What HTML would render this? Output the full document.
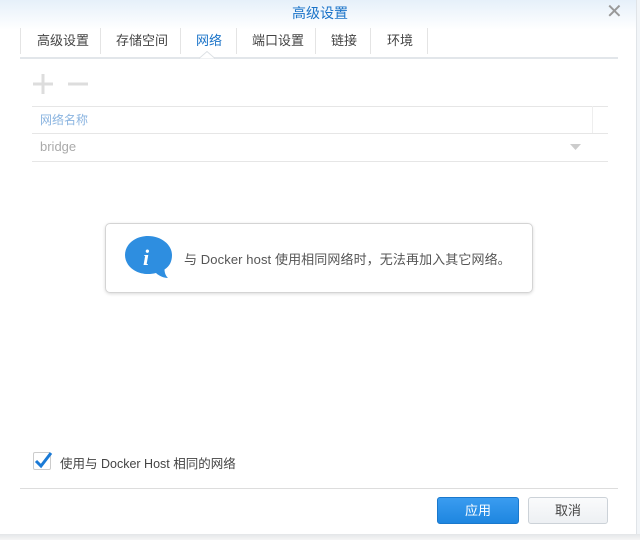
<!DOCTYPE html>
<html><head><meta charset="utf-8"><style>
*{margin:0;padding:0;box-sizing:border-box}
body{width:640px;height:540px;background:#fff;font-family:"Liberation Sans","Noto Sans CJK SC",sans-serif;position:relative;overflow:hidden;color:#333}
.a{position:absolute}
.title{left:0;top:0;width:640px;height:30px;background:linear-gradient(#e6f0fa,#fff)}
.tab{top:32px;font-size:13px;color:#444;line-height:18px}
.sep{top:28px;width:1px;height:26px;background:#e4e4e4}
.line{height:1px;background:#e6e6e6}
</style></head><body>
<div class="a title"></div>
<div class="a" style="right:0;top:0;width:4px;height:540px;background:#f2f5f8;border-left:1px solid #e0e4e8"></div>
<div class="a" style="left:0;top:0;width:100%;text-align:center;top:4px;font-size:14px;color:#1a73c8;line-height:18px">高级设置</div>
<div class="a" style="left:606px;top:1px;font-size:20px;color:#999;line-height:22px">✕</div>
<div class="a tab" style="left:37px">高级设置</div>
<div class="a sep" style="left:100px"></div>
<div class="a tab" style="left:116px">存储空间</div>
<div class="a sep" style="left:180px"></div>
<div class="a tab" style="left:196px;color:#1a73c8">网络</div>
<div class="a sep" style="left:236px"></div>
<div class="a tab" style="left:252px">端口设置</div>
<div class="a sep" style="left:315px"></div>
<div class="a tab" style="left:331px">链接</div>
<div class="a sep" style="left:370px"></div>
<div class="a tab" style="left:387px">环境</div>
<div class="a sep" style="left:427px"></div>
<div class="a sep" style="left:20px"></div>
<div class="a" style="left:20px;top:57px;width:598px;height:2px;background:#e2e6ea"></div>
<svg class="a" style="left:199px;top:51px" width="16" height="8"><path d="M0 7.5 L8 0.5 L16 7.5" fill="#fff" stroke="#dde1e5"/></svg>
<svg class="a" style="left:32px;top:73px" width="60" height="22"><path d="M11 1v20M1 11h20" stroke="#ddd" stroke-width="3"/><path d="M36 11h20" stroke="#ddd" stroke-width="3"/></svg>
<div class="a line" style="left:32px;top:106px;width:576px"></div>
<div class="a" style="left:592px;top:106px;width:1px;height:27px;background:#eee"></div>
<div class="a" style="left:40px;top:111px;font-size:12px;color:#8ab4e0">网络名称</div>
<div class="a line" style="left:32px;top:133px;width:576px"></div>
<div class="a" style="left:40px;top:139px;font-size:13px;color:#aaa">bridge</div>
<svg class="a" style="left:570px;top:144px" width="12" height="7"><path d="M0 0h11l-5.5 6z" fill="#ccc"/></svg>
<div class="a line" style="left:32px;top:161px;width:576px"></div>
<div class="a" style="left:105px;top:223px;width:428px;height:70px;border:1px solid #d4d4d4;border-radius:5px;box-shadow:0 1px 3px rgba(0,0,0,.15)"></div>
<svg class="a" style="left:122px;top:234px" width="54" height="50"><path d="M26 2C13 2 3 10.5 3 21c0 10.5 10 19 23 19 3 0 5-.3 8-1 3 3 8 5 12 5-2-2-3.5-5-3.5-8.5C48 32 50 27 50 21 50 10.5 39 2 26 2z" fill="#2e8ee0"/><text x="21" y="31" font-family="Liberation Serif,serif" font-style="italic" font-weight="bold" font-size="22" fill="#fff">i</text></svg>
<div class="a" style="left:184px;top:249px;font-size:13px;color:#555;letter-spacing:.1px">与 Docker host 使用相同网络时，无法再加入其它网络。</div>
<div class="a" style="left:33px;top:452px;width:18px;height:18px;border:1px solid #ccc;border-radius:2px"></div>
<svg class="a" style="left:33px;top:450px" width="20" height="20"><path d="M3 11l5 5L18 3" fill="none" stroke="#1a7ad6" stroke-width="3"/></svg>
<div class="a" style="left:60px;top:453px;font-size:12.5px;color:#444">使用与 Docker Host 相同的网络</div>
<div class="a" style="left:20px;top:488px;width:598px;height:1px;background:#ddd"></div>
<div class="a" style="left:437px;top:497px;width:82px;height:27px;background:linear-gradient(#3a9cf0,#1e86e0);border:1px solid #1a78cc;border-radius:3px;color:#fff;font-size:13px;text-align:center;line-height:25px">应用</div>
<div class="a" style="left:528px;top:497px;width:80px;height:27px;background:linear-gradient(#fafbfc,#edf0f3);border:1px solid #ccd2d8;border-radius:3px;color:#444;font-size:13px;text-align:center;line-height:25px">取消</div>
<div class="a" style="left:0;top:534px;width:640px;height:6px;background:linear-gradient(#e4e6e8,#f6f6f6)"></div>
</body></html>
